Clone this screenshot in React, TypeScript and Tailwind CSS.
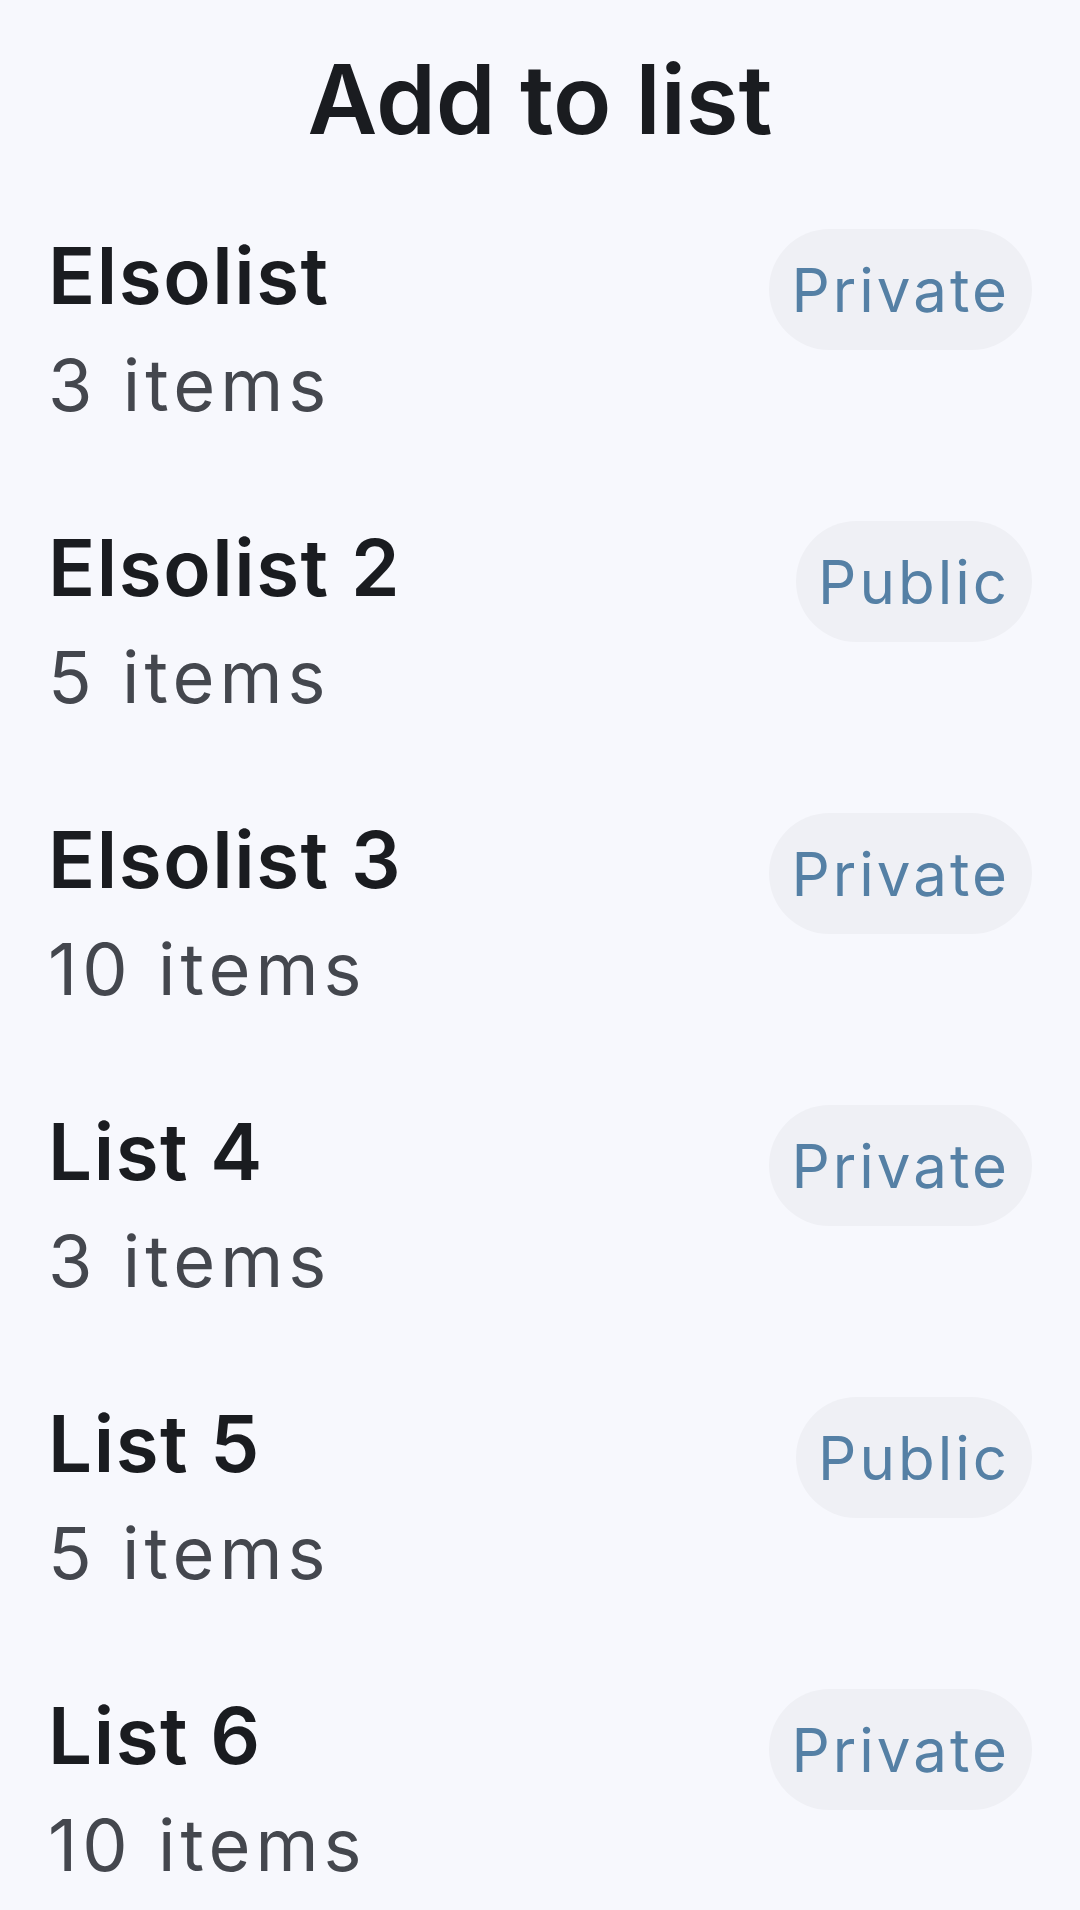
import React from "react";

// Each list the item can be added to
interface ListEntry {
  name: string;
  count: number;
  visibility: "Private" | "Public";
}

const lists: ListEntry[] = [
  { name: "Elsolist", count: 3, visibility: "Private" },
  { name: "Elsolist 2", count: 5, visibility: "Public" },
  { name: "Elsolist 3", count: 10, visibility: "Private" },
  { name: "List 4", count: 3, visibility: "Private" },
  { name: "List 5", count: 5, visibility: "Public" },
  { name: "List 6", count: 10, visibility: "Private" },
];

const font = { fontFamily: "Inter, 'Noto Sans', sans-serif" };

const ListRow = ({ entry }: { entry: ListEntry }) => {
  return (
    <div className="flex items-start justify-between px-12">
      <div className="flex flex-col gap-[19px]">
        <span className="text-[78px] font-semibold leading-[94px] tracking-[0.02em] text-[#1a1c20]">
          {entry.name}
        </span>
        <span className="text-[72px] font-normal leading-[86px] tracking-[0.07em] text-[#44474e]">
          {entry.count} items
        </span>
      </div>
      <span className="flex h-[121px] items-center rounded-full bg-[#eff0f5] px-[22px] text-[60px] leading-[72px] tracking-[0.05em] text-[#5580a5]">
        {entry.visibility}
      </span>
    </div>
  );
};

const App = () => {
  return (
    <main
      className="min-h-screen w-full bg-[#f7f8fd] pt-[42px]"
      style={font}
    >
      <h1 className="text-center text-[96px] font-semibold leading-[115px] text-[#1a1c20]">
        Add to list
      </h1>
      <section className="mt-[72px] flex flex-col gap-[93px]">
        {lists.map((entry) => (
          <ListRow key={entry.name} entry={entry} />
        ))}
      </section>
    </main>
  );
};

export default App;
